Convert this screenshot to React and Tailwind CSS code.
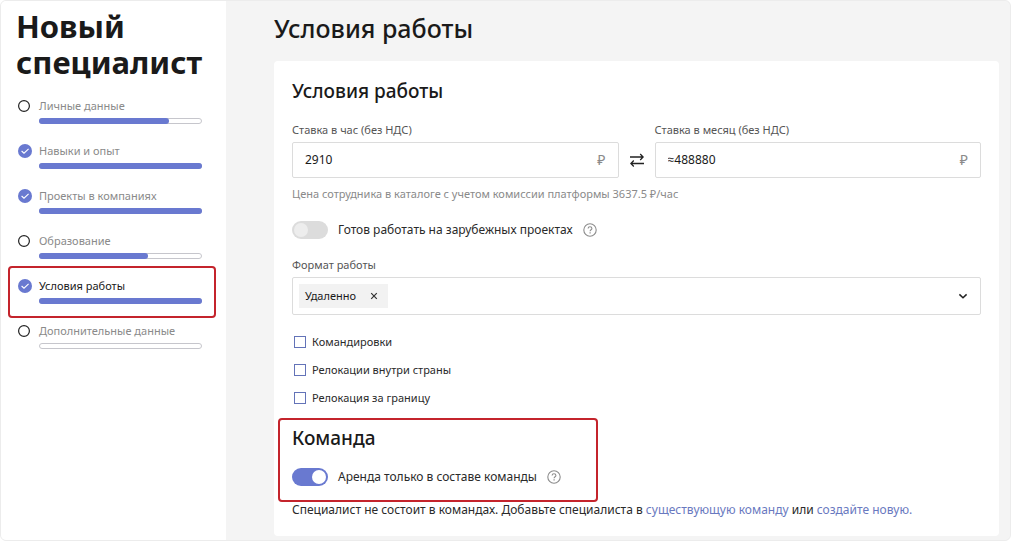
import React, { useState } from 'react';
import clsx from 'clsx';

const steps = [
  { id: 'personal', title: 'Личные данные', progress: 80 },
  { id: 'skills', title: 'Навыки и опыт', progress: 100 },
  { id: 'projects', title: 'Проекты в компаниях', progress: 100 },
  { id: 'education', title: 'Образование', progress: 67 },
  { id: 'conditions', title: 'Условия работы', progress: 100, active: true },
  { id: 'extra', title: 'Дополнительные данные', progress: 0 },
];

const StepIcon = ({ done }) =>
  done ? (
    <svg viewBox="0 0 14 14" className="w-3.5 h-3.5 shrink-0" aria-hidden="true">
      <circle cx="7" cy="7" r="7" fill="#6979d0" />
      <path d="M3.6 7 6 9.2 10.6 4.9" fill="none" stroke="#fff" strokeWidth="1.1" />
    </svg>
  ) : (
    <svg viewBox="0 0 14 14" className="w-3.5 h-3.5 shrink-0" aria-hidden="true">
      <circle cx="6" cy="7" r="5.4" fill="none" stroke="#222" strokeWidth="1.2" />
    </svg>
  );

const HelpIcon = () => (
  <svg viewBox="0 0 14 14" className="w-3.5 h-3.5" fill="none" stroke="#8c8c8c" aria-hidden="true">
    <circle cx="7" cy="7" r="6.2" strokeWidth="1.1" />
    <path d="M5.1 5.6c0-1.2.8-1.9 1.9-1.9s1.9.7 1.9 1.7c0 1.3-1.8 1.4-1.8 2.9" strokeWidth="1.1" />
    <path d="M7.1 9.3v1.2" strokeWidth="1.2" />
  </svg>
);

const Step = ({ step }) => (
  <li className="relative">
    <a href={`#${step.id}`} className="flex gap-[7px]">
      <span className="pt-px">
        <StepIcon done={step.progress === 100} />
      </span>
      <span className="flex-1">
        <span className={clsx('block text-[11px] leading-4', step.active ? 'text-[#1a1a1a]' : 'text-[#8a8a8a]')}>
          {step.title}
        </span>
        <span className="block mt-1 h-1.5 rounded-full border border-[#c6c6cc] bg-white relative">
          <span className="absolute -inset-px">
            <span className="block h-full rounded-full bg-[#6979d0]" style={{ width: `${step.progress}%` }} />
          </span>
        </span>
      </span>
    </a>
    {step.active && (
      <span className="absolute -left-2.5 -right-3.5 -top-3 -bottom-3.5 border-2 border-[#c4242c] rounded pointer-events-none" />
    )}
  </li>
);

const PriceField = ({ id, label, value, onChange }) => (
  <div className="flex-1 min-w-0">
    <label htmlFor={id} className="block text-[11px] leading-4 text-[#555]">{label}</label>
    <div className="mt-1 flex items-center h-9 border border-[#dcdcdc] rounded-xs px-3">
      <input
        id={id}
        value={value}
        onChange={(e) => onChange(e.target.value)}
        className="flex-1 min-w-0 text-xs text-[#1a1a1a] outline-none"
      />
      <span className="text-sm text-[#8a8a8a]">₽</span>
    </div>
  </div>
);

const Toggle = ({ id, label, checked, onChange }) => (
  <div className="flex items-center h-[18px] mt-[18px]">
    <input
      id={id}
      type="checkbox"
      role="switch"
      checked={checked}
      onChange={(e) => onChange(e.target.checked)}
      className="appearance-none flex items-center w-9 h-[18px] px-0.5 rounded-full bg-[#dcdcdc] checked:bg-[#6979d0] before:block before:w-3.5 before:h-3.5 before:rounded-full before:bg-[#ededed] checked:before:bg-white checked:before:ml-auto"
    />
    <label htmlFor={id} className="ml-2.5 text-xs leading-4 text-[#2a2a2a]">{label}</label>
    <button type="button" aria-label="Подсказка" className="ml-2.5">
      <HelpIcon />
    </button>
  </div>
);

const relocation = ['Командировки', 'Релокации внутри страны', 'Релокация за границу'];

const App = () => {
  const [hourRate, setHourRate] = useState('2910');
  const [monthRate, setMonthRate] = useState('≈488880');
  const [abroad, setAbroad] = useState(false);
  const [teamOnly, setTeamOnly] = useState(true);
  const [formats, setFormats] = useState(['Удаленно']);

  return (
    <div className="flex min-h-screen bg-[#f4f4f4] border border-[#ececec] rounded-md overflow-hidden text-[#1a1a1a] font-['Noto_Sans','Open_Sans',sans-serif]">
      <aside className="w-[225px] shrink-0 bg-white pl-[15px] pr-6 pt-[7px]">
        <h2 className="text-[31px] leading-9 font-bold">Новый специалист</h2>
        <ul className="mt-[18px] pl-0.5 flex flex-col gap-[19px]">
          {steps.map((step) => (
            <Step key={step.id} step={step} />
          ))}
        </ul>
      </aside>

      <main className="flex-1 min-w-0 pl-12 pr-[11px] pt-[11px]">
        <h1 className="text-[25px] leading-8 font-medium">Условия работы</h1>

        <section className="mt-[17px] bg-white rounded-sm p-[18px]">
          <h2 className="text-[19px] leading-6 font-medium">Условия работы</h2>

          <div className="mt-[19px] flex items-end">
            <PriceField id="hour" label="Ставка в час (без НДС)" value={hourRate} onChange={setHourRate} />
            <button type="button" aria-label="Пересчитать" className="w-9 h-9 flex items-center justify-center">
              <svg viewBox="0 0 14 14" className="w-3.5 h-3.5" fill="none" stroke="#222" strokeWidth="1.3" aria-hidden="true">
                <path d="M0 4h13M10.2 1 13.2 4l-3 3M14 10.5H1M3.8 7.5.8 10.5l3 3" />
              </svg>
            </button>
            <PriceField id="month" label="Ставка в месяц (без НДС)" value={monthRate} onChange={setMonthRate} />
          </div>
          <p className="mt-[7px] text-[11px] leading-[18px] text-[#8a8a8a]">
            Цена сотрудника в каталоге с учетом комиссии платформы 3637.5 ₽/час
          </p>

          <Toggle id="abroad" label="Готов работать на зарубежных проектах" checked={abroad} onChange={setAbroad} />

          <label htmlFor="format" className="block mt-[18px] text-[11px] leading-4 text-[#555]">Формат работы</label>
          <div className="mt-1 flex items-center h-[38px] border border-[#dcdcdc] rounded-xs pl-1.5 pr-3">
            {formats.map((format) => (
              <span key={format} className="flex items-center gap-2.5 h-6 px-1.5 bg-[#f2f2f2] text-[11px]">
                {format}
                <button
                  type="button"
                  aria-label={`Убрать ${format}`}
                  className="w-4 h-4 flex items-center justify-center"
                  onClick={() => setFormats(formats.filter((f) => f !== format))}
                >
                  <svg viewBox="0 0 8 8" className="w-2 h-2" stroke="#333" strokeWidth="1.2" aria-hidden="true">
                    <path d="M1.2 1.2l5.6 5.6M6.8 1.2 1.2 6.8" />
                  </svg>
                </button>
              </span>
            ))}
            <input id="format" className="flex-1 min-w-0 px-2 text-xs outline-none" />
            <button type="button" aria-label="Показать варианты">
              <svg viewBox="0 0 10 10" className="w-2.5 h-2.5" fill="none" stroke="#222" strokeWidth="1.5" aria-hidden="true">
                <path d="M1.4 3.4 5 6.8l3.6-3.4" />
              </svg>
            </button>
          </div>

          <div className="mt-[19px] pl-0.5 flex flex-col gap-3">
            {relocation.map((item) => (
              <label key={item} className="flex items-center gap-1.5 text-[11px] leading-4 text-[#2a2a2a]">
                <input type="checkbox" className="appearance-none w-3 h-3 border border-[#6373b8] checked:bg-[#6979d0]" />
                {item}
              </label>
            ))}
          </div>

          <div className="relative mt-5">
            <h2 className="text-[19px] leading-6 font-medium">Команда</h2>
            <Toggle id="team" label="Аренда только в составе команды" checked={teamOnly} onChange={setTeamOnly} />
            <span className="absolute -left-3.5 -top-2 -bottom-4 w-80 border-2 border-[#c4242c] rounded pointer-events-none" />
          </div>
          <p className="mt-4 text-xs leading-4 text-[#2a2a2a]">
            Специалист не состоит в командах. Добавьте специалиста в{' '}
            <a href="#team-existing" className="text-[#6979c0]">существующую команду</a> или{' '}
            <a href="#team-new" className="text-[#6979c0]">создайте новую.</a>
          </p>
        </section>
      </main>
    </div>
  );
};

export default App;
